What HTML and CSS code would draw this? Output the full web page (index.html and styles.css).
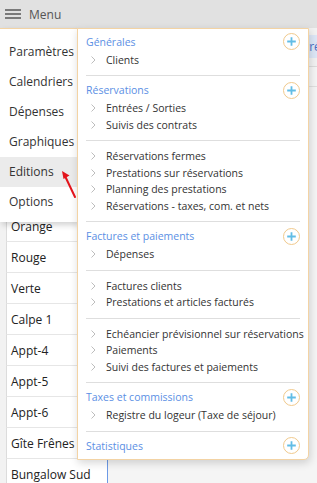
FILE: index.html
```html
<!DOCTYPE html>
<html lang="fr">
<head>
<meta charset="utf-8">
<title>Menu</title>
<link rel="stylesheet" href="styles.css">
</head>
<body>
<div class="app">
  <header class="topbar">
    <span class="burger"><i></i><i></i><i></i></span>
    <span class="title">Menu</span>
  </header>

  <div class="planning">
    <div class="toolbar"><span class="pref">Préférences</span></div>
    <div class="dates"><div class="label"></div><div class="days"></div></div>
    <div class="row"><div class="label"></div><div class="days"></div></div>
    <div class="row"><div class="label"></div><div class="days"></div></div>
    <div class="row"><div class="label"></div><div class="days"></div></div>
    <div class="row"><div class="label"></div><div class="days"></div></div>
    <div class="row"><div class="label">Orange</div><div class="days"></div></div>
    <div class="row"><div class="label">Rouge</div><div class="days"></div></div>
    <div class="row"><div class="label">Verte</div><div class="days"></div></div>
    <div class="row"><div class="label">Calpe 1</div><div class="days"></div></div>
    <div class="row"><div class="label">Appt-4</div><div class="days"></div></div>
    <div class="row"><div class="label">Appt-5</div><div class="days"></div></div>
    <div class="row"><div class="label">Appt-6</div><div class="days"></div></div>
    <div class="row"><div class="label">Gîte Frênes</div><div class="days"></div></div>
    <div class="row"><div class="label">Bungalow Sud</div><div class="days"></div></div>
  </div>

  <nav class="menu">
    <div class="menu-item">Paramètres</div>
    <div class="menu-item">Calendriers</div>
    <div class="menu-item">Dépenses</div>
    <div class="menu-item">Graphiques</div>
    <div class="menu-item active">Editions</div>
    <div class="menu-item">Options</div>
  </nav>

  <div class="submenu">
    <div class="group-title"><span>Générales</span><svg class="plus" viewBox="0 0 17 17"><circle cx="8.5" cy="8.5" r="8"/><path d="M8.5 4.2v8.6M4.2 8.5h8.6"/></svg></div>
    <ul class="items">
      <li><svg class="chev" viewBox="0 0 5 8"><path d="M0.5 0.5L4 4L0.5 7.5"/></svg>Clients</li>
    </ul>
    <hr class="sep">
    <div class="group-title"><span>Réservations</span><svg class="plus" viewBox="0 0 17 17"><circle cx="8.5" cy="8.5" r="8"/><path d="M8.5 4.2v8.6M4.2 8.5h8.6"/></svg></div>
    <ul class="items">
      <li><svg class="chev" viewBox="0 0 5 8"><path d="M0.5 0.5L4 4L0.5 7.5"/></svg>Entrées / Sorties</li>
      <li><svg class="chev" viewBox="0 0 5 8"><path d="M0.5 0.5L4 4L0.5 7.5"/></svg>Suivis des contrats</li>
    </ul>
    <hr class="sep">
    <ul class="items">
      <li><svg class="chev" viewBox="0 0 5 8"><path d="M0.5 0.5L4 4L0.5 7.5"/></svg>Réservations fermes</li>
      <li><svg class="chev" viewBox="0 0 5 8"><path d="M0.5 0.5L4 4L0.5 7.5"/></svg>Prestations sur réservations</li>
      <li><svg class="chev" viewBox="0 0 5 8"><path d="M0.5 0.5L4 4L0.5 7.5"/></svg>Planning des prestations</li>
      <li><svg class="chev" viewBox="0 0 5 8"><path d="M0.5 0.5L4 4L0.5 7.5"/></svg>Réservations - taxes, com. et nets</li>
    </ul>
    <hr class="sep">
    <div class="group-title"><span>Factures et paiements</span><svg class="plus" viewBox="0 0 17 17"><circle cx="8.5" cy="8.5" r="8"/><path d="M8.5 4.2v8.6M4.2 8.5h8.6"/></svg></div>
    <ul class="items">
      <li><svg class="chev" viewBox="0 0 5 8"><path d="M0.5 0.5L4 4L0.5 7.5"/></svg>Dépenses</li>
    </ul>
    <hr class="sep">
    <ul class="items">
      <li><svg class="chev" viewBox="0 0 5 8"><path d="M0.5 0.5L4 4L0.5 7.5"/></svg>Factures clients</li>
      <li><svg class="chev" viewBox="0 0 5 8"><path d="M0.5 0.5L4 4L0.5 7.5"/></svg>Prestations et articles facturés</li>
    </ul>
    <hr class="sep">
    <ul class="items">
      <li><svg class="chev" viewBox="0 0 5 8"><path d="M0.5 0.5L4 4L0.5 7.5"/></svg>Echéancier prévisionnel sur réservations</li>
      <li><svg class="chev" viewBox="0 0 5 8"><path d="M0.5 0.5L4 4L0.5 7.5"/></svg>Paiements</li>
      <li><svg class="chev" viewBox="0 0 5 8"><path d="M0.5 0.5L4 4L0.5 7.5"/></svg>Suivi des factures et paiements</li>
    </ul>
    <hr class="sep">
    <div class="group-title"><span>Taxes et commissions</span><svg class="plus" viewBox="0 0 17 17"><circle cx="8.5" cy="8.5" r="8"/><path d="M8.5 4.2v8.6M4.2 8.5h8.6"/></svg></div>
    <ul class="items">
      <li><svg class="chev" viewBox="0 0 5 8"><path d="M0.5 0.5L4 4L0.5 7.5"/></svg>Registre du logeur (Taxe de séjour)</li>
    </ul>
    <hr class="sep">
    <div class="group-title"><span>Statistiques</span><svg class="plus" viewBox="0 0 17 17"><circle cx="8.5" cy="8.5" r="8"/><path d="M8.5 4.2v8.6M4.2 8.5h8.6"/></svg></div>
  </div>

  <svg class="arrow" viewBox="0 0 22 36">
    <path class="arrow-shaft" d="M17 31L7 10"/>
    <path class="arrow-head" d="M4 5L11.5 9.5L5.5 13Z"/>
  </svg>
</div>
</body>
</html>
```

FILE: styles.css
```css
* { box-sizing: border-box; }

html, body {
  margin: 0;
  padding: 0;
}

body {
  font-family: "Open Sans", "Noto Sans", "Liberation Sans", sans-serif;
  color: #333;
  background: #f2f2f2;
}

.app {
  position: relative;
  width: 317px;
  height: 483px;
  overflow: hidden;
  background: #f2f2f2;
}

/* top bar */
.topbar {
  height: 28px;
  background: #e1e1e1;
  display: flex;
  align-items: center;
  padding-left: 5px;
  gap: 8px;
}

.burger {
  display: flex;
  flex-direction: column;
  gap: 2px;
  width: 16px;
}

.burger i {
  display: block;
  height: 2px;
  background: #7a7a7a;
}

.title {
  font-size: 12px;
  color: #555;
}

/* background planning */
.planning {
  display: flex;
  flex-direction: column;
}

.toolbar {
  height: 39px;
  display: flex;
  align-items: flex-start;
  padding: 7px 0 0 295px;
  white-space: nowrap;
  border-bottom: 1px solid #dcdcdc;
}

.pref {
  background: #dde7f7;
  color: #4b6fc4;
  font-size: 12px;
  height: 23px;
  line-height: 23px;
  padding: 0 7px;
}

.dates, .row {
  display: flex;
  padding-left: 6px;
}

.dates {
  height: 20px;
}

.row {
  height: 31px;
}

.label {
  width: 101px;
  flex: none;
  background: #fff;
  border-left: 1px solid #dcdcdc;
  border-bottom: 1px solid #e6e6e6;
  font-size: 12px;
  color: #222;
  padding-left: 4px;
  display: flex;
  align-items: center;
  white-space: nowrap;
}

.days {
  flex: 1;
  border-left: 1px solid #6d9ae6;
  background-color: #f5f5f5;
  background-image: repeating-linear-gradient(to right, transparent 0 30px, #e4e4e4 30px 31px);
  background-size: 30px 100%;
  background-position: 0 0;
}

.dates .days {
  border-bottom: 1px solid #e0e0e0;
}

/* left menu */
.menu {
  position: absolute;
  left: 0;
  top: 28px;
  width: 78px;
  background: #fff;
  border-top: 1px solid #f3d3a4;
  padding: 8px 0 5px;
  box-shadow: 2px 3px 6px rgba(0, 0, 0, 0.18);
}

.menu-item {
  height: 30px;
  line-height: 30px;
  padding-left: 9px;
  font-size: 12px;
  color: #333;
  white-space: nowrap;
}

.menu-item.active {
  background: #ebebeb;
}

/* submenu panel */
.submenu {
  position: absolute;
  left: 77px;
  top: 28px;
  width: 232px;
  background: #fff;
  border: 1px solid #f3d3a4;
  border-radius: 0 0 5px 0;
  padding: 5.5px 8px 3.5px;
  box-shadow: 1px 3px 8px rgba(0, 0, 0, 0.16);
}

.group-title {
  height: 17px;
  padding-bottom: 3px;
  display: flex;
  align-items: center;
  justify-content: space-between;
  font-size: 10.5px;
  color: #5b8fe4;
  white-space: nowrap;
}

.plus {
  width: 17px;
  height: 17px;
  flex: none;
}

.plus circle {
  fill: #fff;
  stroke: #f0c98c;
  stroke-width: 1;
}

.plus path {
  stroke: #62bde6;
  stroke-width: 1.8;
  fill: none;
}

.items {
  list-style: none;
  margin: 0;
  padding: 0;
}

.items li {
  height: 16.5px;
  line-height: 16.5px;
  font-size: 10.5px;
  color: #333;
  display: flex;
  align-items: center;
  white-space: nowrap;
}

.chev {
  width: 5px;
  height: 8px;
  margin: 0 10px 0 5px;
  flex: none;
}

.chev path {
  fill: none;
  stroke: #b5b5b5;
  stroke-width: 0.9;
}

.sep {
  border: 0;
  border-top: 1px solid #dedede;
  margin: 7px 0;
  height: 0;
}

/* annotation arrow */
.arrow {
  position: absolute;
  left: 58px;
  top: 166px;
  width: 22px;
  height: 36px;
}

.arrow-shaft {
  stroke: #e3141b;
  stroke-width: 2;
  fill: none;
  stroke-linecap: round;
}

.arrow-head {
  fill: #e3141b;
}
```
